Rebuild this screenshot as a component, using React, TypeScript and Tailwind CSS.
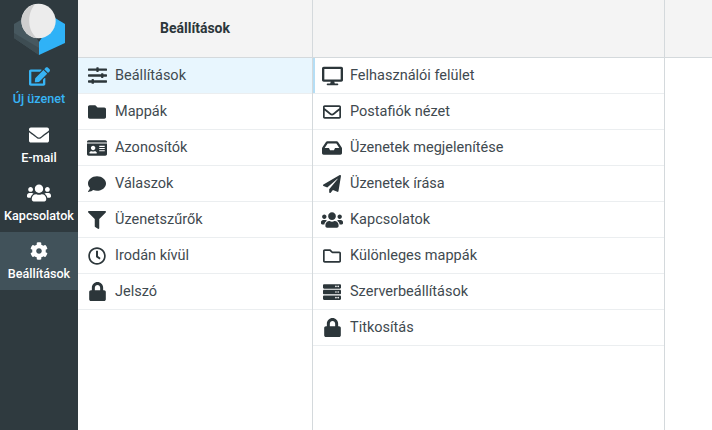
import React from "react";
import {
  FaSlidersH, FaFolder, FaIdCard, FaComment, FaFilter, FaRegClock, FaLock, FaDesktop,
  FaRegEnvelope, FaInbox, FaPaperPlane, FaUsers, FaRegFolder, FaServer, FaEdit, FaEnvelope, FaCog,
} from "react-icons/fa";

type Icon = React.ComponentType<{ className?: string }>;
type Item = { icon: Icon; label: string; size: string; active?: boolean; marker?: boolean };

const left: Item[] = [
  { icon: FaSlidersH, label: "Beállítások", size: "h-[19px] w-[19px]", active: true },
  { icon: FaFolder, label: "Mappák", size: "h-[18px] w-[18px]" },
  { icon: FaIdCard, label: "Azonosítók", size: "h-[20px] w-[20px]" },
  { icon: FaComment, label: "Válaszok", size: "h-[18px] w-[18px]" },
  { icon: FaFilter, label: "Üzenetszűrők", size: "h-[18px] w-[18px]" },
  { icon: FaRegClock, label: "Irodán kívül", size: "h-[18px] w-[18px]" },
  { icon: FaLock, label: "Jelszó", size: "h-[19px] w-[17px]" },
];
const right: Item[] = [
  { icon: FaDesktop, label: "Felhasználói felület", size: "h-[20px] w-[21px]", marker: true },
  { icon: FaRegEnvelope, label: "Postafiók nézet", size: "h-[18px] w-[18px]" },
  { icon: FaInbox, label: "Üzenetek megjelenítése", size: "h-[20px] w-[20px]" },
  { icon: FaPaperPlane, label: "Üzenetek írása", size: "h-[18px] w-[18px]" },
  { icon: FaUsers, label: "Kapcsolatok", size: "h-[22px] w-[22px]" },
  { icon: FaRegFolder, label: "Különleges mappák", size: "h-[18px] w-[18px]" },
  { icon: FaServer, label: "Szerverbeállítások", size: "h-[18px] w-[18px]" },
  { icon: FaLock, label: "Titkosítás", size: "h-[19px] w-[17px]" },
];
const nav: { icon: Icon; label: string; bg: string; size: string }[] = [
  { icon: FaEnvelope, label: "E-mail", bg: "", size: "h-[20px] w-[20px]" },
  { icon: FaUsers, label: "Kapcsolatok", bg: "", size: "h-[24px] w-[24px]" },
  { icon: FaCog, label: "Beállítások", bg: "bg-[#41525a]", size: "h-[18px] w-[18px]" },
];

function Row({ icon: Icon, label, size, active, marker }: Item) {
  return (
    <div className={`relative flex h-9 items-center border-b border-[#ebeef0] ${active ? "bg-[#e8f6fe]" : ""}`}>
      {marker && <div className="absolute inset-y-0 left-0 w-[2px] bg-[#b5def5]" />}
      <div className="flex w-[37px] shrink-0 justify-center pl-[1px]">
        <Icon className={`${size} text-[#2c363a]`} />
      </div>
      <span className="text-[14.5px] text-[#3f4a50]">{label}</span>
    </div>
  );
}

function Logo() {
  return (
    <svg viewBox="0 0 78 58" className="h-[58px] w-[78px]">
      <path d="M14 24 L24 18 L39 42 L39 55 L14 38 Z" fill="#47585f" />
      <path d="M14 33 L39 48 L39 55 L14 38 Z" fill="#3e4d53" />
      <path d="M39 42 L55 18 L65 24 L65 43 L39 55 Z" fill="#2fb2f7" />
      <circle cx="38.5" cy="21" r="17.2" fill="#ececec" />
      <path d="M35 4.2 A17.2 17.2 0 0 0 37 38.1 C28 31 26 15 35 4.2 Z" fill="#cfcfcf" />
    </svg>
  );
}

export default function App() {
  return (
    <div className="flex h-[430px] w-[712px] overflow-hidden bg-white font-['Roboto',sans-serif]">
      <aside className="flex w-[78px] shrink-0 flex-col bg-[#2f3a3f]">
        <Logo />
        <div className="flex h-[58px] flex-col items-center pt-[8px] text-[#37b4f5]">
          <FaEdit className="h-[21px] w-[21px]" />
          <span className="mt-[3px] text-[12.6px] font-medium leading-[18px]">Új üzenet</span>
        </div>
        {nav.map(({ icon: Icon, label, bg, size }) => (
          <div key={label} className={`flex h-[58px] flex-col items-center pt-[8px] text-white ${bg}`}>
            <div className="flex h-[21px] items-center justify-center">
              <Icon className={size} />
            </div>
            <span className="mt-[4px] text-[12.6px] font-medium leading-[18px]">{label}</span>
          </div>
        ))}
      </aside>
      <section className="flex w-[235px] shrink-0 flex-col border-r border-[#d4d9dc]">
        <header className="flex h-[58px] shrink-0 items-center justify-center border-b border-[#d4d9dc] bg-[#f4f4f4] text-[14px] font-bold text-[#2c363a]">
          Beállítások
        </header>
        {left.map((r) => <Row key={r.label} {...r} />)}
      </section>
      <section className="flex w-[352px] shrink-0 flex-col border-r border-[#d4d9dc]">
        <header className="h-[58px] shrink-0 border-b border-[#d4d9dc] bg-[#f4f4f4]" />
        {right.map((r) => <Row key={r.label} {...r} />)}
      </section>
      <section className="flex-1">
        <header className="h-[58px] border-b border-[#d4d9dc] bg-[#f4f4f4]" />
      </section>
    </div>
  );
}
